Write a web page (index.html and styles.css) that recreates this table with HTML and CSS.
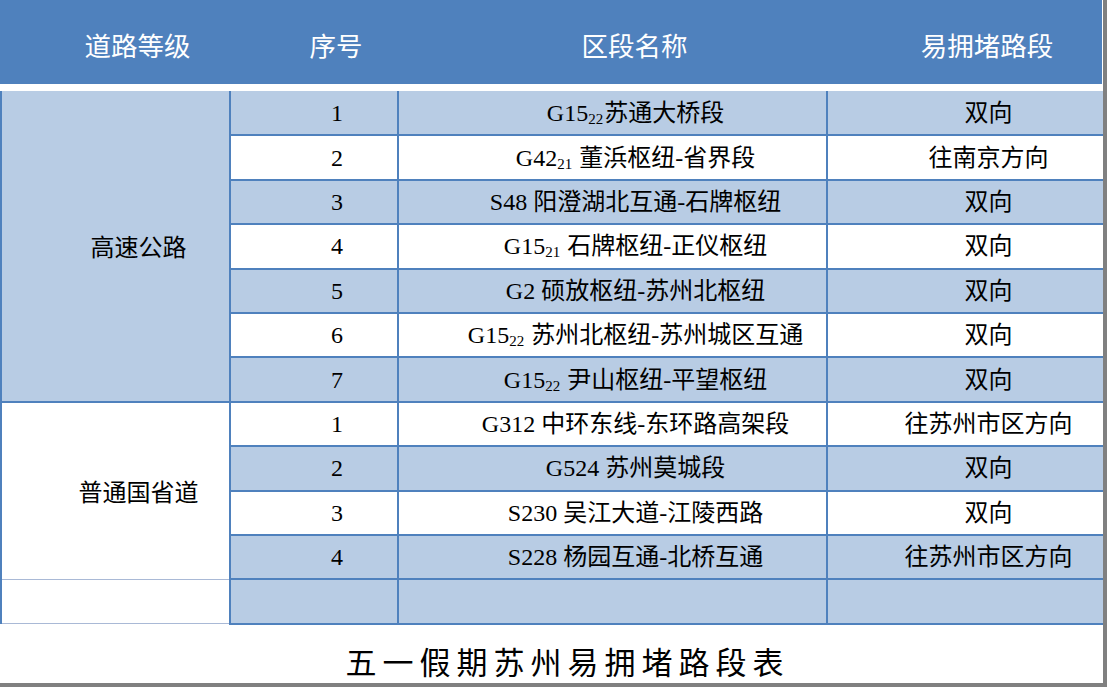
FILE: index.html
```html
<!DOCTYPE html>
<html lang="zh">
<head>
<meta charset="utf-8">
<title>五一假期苏州易拥堵路段表</title>
<link rel="stylesheet" href="styles.css">
</head>
<body>
<div class="slide">
  <div class="head">
    <div class="hc">道路等级</div>
    <div class="hc">序号</div>
    <div class="hc">区段名称</div>
    <div class="hc">易拥堵路段</div>
  </div>
  <table class="grid">
    <colgroup>
      <col class="c1"><col class="c2"><col class="c3"><col class="c4">
    </colgroup>
    <tbody>
      <tr class="b">
        <td class="cat cat-hw" rowspan="7">高速公路</td>
        <td>1</td><td>G15<sub class="s">22</sub>苏通大桥段</td><td>双向</td>
      </tr>
      <tr class="w"><td>2</td><td>G42<sub class="s">21</sub> 董浜枢纽-省界段</td><td>往南京方向</td></tr>
      <tr class="b"><td>3</td><td>S48 阳澄湖北互通-石牌枢纽</td><td>双向</td></tr>
      <tr class="w"><td>4</td><td>G15<sub class="s">21</sub> 石牌枢纽-正仪枢纽</td><td>双向</td></tr>
      <tr class="b"><td>5</td><td>G2 硕放枢纽-苏州北枢纽</td><td>双向</td></tr>
      <tr class="w"><td>6</td><td>G15<sub class="s">22</sub> 苏州北枢纽-苏州城区互通</td><td>双向</td></tr>
      <tr class="b"><td>7</td><td>G15<sub class="s">22</sub> 尹山枢纽-平望枢纽</td><td>双向</td></tr>
      <tr class="w">
        <td class="cat cat-rd" rowspan="4">普通国省道</td>
        <td>1</td><td>G312 中环东线-东环路高架段</td><td>往苏州市区方向</td>
      </tr>
      <tr class="b"><td>2</td><td>G524 苏州莫城段</td><td>双向</td></tr>
      <tr class="w"><td>3</td><td>S230 吴江大道-江陵西路</td><td>双向</td></tr>
      <tr class="b"><td>4</td><td>S228 杨园互通-北桥互通</td><td>往苏州市区方向</td></tr>
      <tr class="b last"><td class="cat cat-empty"></td><td></td><td></td><td></td></tr>
    </tbody>
  </table>
  <div class="title">五一假期苏州易拥堵路段表</div>
</div>
</body>
</html>
```

FILE: styles.css
```css
html, body {
  margin: 0;
  padding: 0;
}
body {
  background: #808080;
  width: 1107px;
  height: 687px;
  overflow: hidden;
}
.slide {
  width: 1103px;
  height: 683px;
  background: #ffffff;
  overflow: hidden;
  display: flex;
  flex-direction: column;
}
.head {
  flex-shrink: 0;
  width: 1102px;
  height: 84px;
  background: #4f81bd;
  display: grid;
  grid-template-columns: 229px 168px 429px 276px;
  align-items: center;
  margin-bottom: 7px;
}
.hc {
  padding-left: 46px;
  text-align: center;
  color: #ffffff;
  font-family: "Noto Sans CJK SC", sans-serif;
  font-size: 26.5px;
  line-height: 1;
  padding-top: 6px;
}
.grid {
  flex-shrink: 0;
  width: 1102px;
  table-layout: fixed;
  border-collapse: collapse;
  font-family: "Liberation Serif", "Noto Sans CJK SC", serif;
  font-size: 24px;
  color: #000000;
}
.c1 { width: 229px; }
.c2 { width: 168px; }
.c3 { width: 429px; }
.c4 { width: 276px; }
.grid tr { height: 44.4px; }
.grid td {
  padding: 0 0 0 46px;
  text-align: center;
  vertical-align: middle;
  border: 2px solid #4f81bd;
  line-height: 1;
  white-space: nowrap;
}
.grid tr:first-child td { border-top: none; }
.grid td:last-child { border-right: none; }
.grid tr.b td { background: #b8cce4; }
.grid tr.w td { background: #ffffff; }
.grid td.cat {
  font-family: "Noto Sans CJK SC", sans-serif;
  font-size: 24px;
}
.grid tr td.cat-hw { background: #b8cce4; }
.grid tr td.cat-rd { background: #ffffff; border-bottom: 1px solid #a9b9d6; }
.grid tr td.cat-empty { background: #ffffff; border-top: 1px solid #a9b9d6; border-bottom: 1px solid #a9b9d6; }
.s {
  font-size: 15px;
  vertical-align: -3px;
  line-height: 0;
  margin-right: 1px;
}
.title {
  flex: 1 1 0;
  min-height: 0;
  display: flex;
  align-items: center;
  justify-content: center;
  padding: 15px 0 0 32px;
  font-family: "Noto Sans CJK SC", serif;
  font-size: 31px;
  line-height: 1.1;
  letter-spacing: 6px;
  color: #000000;
}
```
